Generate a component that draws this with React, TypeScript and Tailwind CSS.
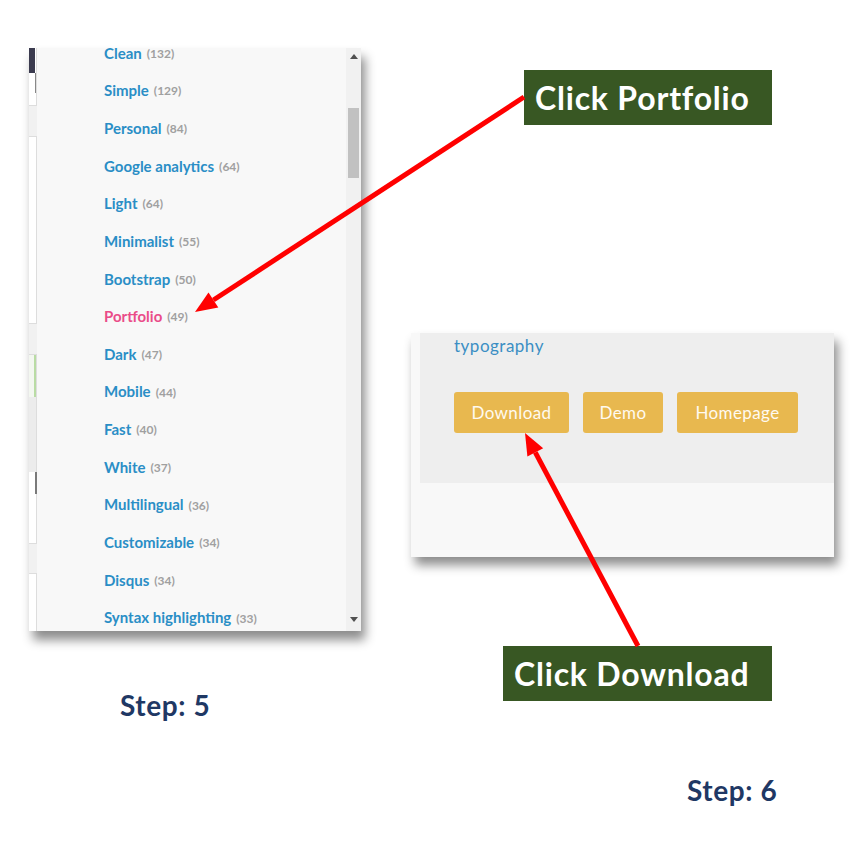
const tags: [string, number][] = [
  ['Clean', 132],
  ['Simple', 129],
  ['Personal', 84],
  ['Google analytics', 64],
  ['Light', 64],
  ['Minimalist', 55],
  ['Bootstrap', 50],
  ['Portfolio', 49],
  ['Dark', 47],
  ['Mobile', 44],
  ['Fast', 40],
  ['White', 37],
  ['Multilingual', 36],
  ['Customizable', 34],
  ['Disqus', 34],
  ['Syntax highlighting', 33],
];

function TagPanel() {
  return (
    <div className="flex h-[583px] w-[332px] overflow-hidden bg-[#f8f8f8] shadow-[4px_9px_10px_rgba(0,0,0,0.45)]">
      {/* sliver of the page behind the dropdown */}
      <div className="flex w-[8px] shrink-0 flex-col bg-[#f1f1f1]">
        <div className="relative h-[59px] border-b border-r border-[#dddddd] bg-white">
          <div className="h-[25px] w-[6px] bg-[#3b3b4f]" />
          <div className="ml-[6px] h-[20px] w-[1px] bg-[#888888]" />
        </div>
        <div className="mt-[30px] h-[193px] border-y border-r border-[#dddddd] bg-white" />
        <div className="mt-[30px] flex h-[195px] flex-col border-y border-r border-[#dddddd] bg-white">
          <div className="h-[42px] border-r-2 border-[#b9dca4] bg-[#f3f7f0]" />
          <div className="h-[75px] bg-[#ececec]" />
          <div className="ml-[6px] h-[22px] w-[2px] bg-[#7a7a7a]" />
        </div>
        <div className="mt-[29px] h-[60px] border-t border-r border-[#dddddd] bg-white" />
      </div>

      <ul className="mt-[-14px] flex-1 pl-[67px] font-['Lato',sans-serif]">
        {tags.map(([name, count]) => (
          <li key={name} className="flex h-[37.67px] items-center whitespace-nowrap">
            <span
              className={`text-[15px] font-bold ${name === 'Portfolio' ? 'text-[#ea4c89]' : 'text-[#2a8ec6]'}`}
            >
              {name}
            </span>
            <span className="ml-[5px] mt-[2px] text-[12px] font-bold text-[#a0a0a0]">({count})</span>
          </li>
        ))}
      </ul>

      <div className="flex w-[15px] shrink-0 flex-col items-center bg-[#f1f1f1]">
        <svg width="8" height="5" viewBox="0 0 8 5" className="mt-[6px]">
          <polygon points="4,0 8,5 0,5" fill="#505050" />
        </svg>
        <div className="mt-[49px] h-[70px] w-[11px] bg-[#c1c1c1]" />
        <div className="flex-1" />
        <svg width="8" height="5" viewBox="0 0 8 5" className="mb-[9px]">
          <polygon points="0,0 8,0 4,5" fill="#505050" />
        </svg>
      </div>
    </div>
  );
}

function ActionPanel() {
  const btn =
    'flex h-[41px] items-center justify-center rounded-[3px] bg-[#e8b84f] text-[17px] tracking-[0.4px] text-[#fffaf0]';
  return (
    <div className="flex h-[224px] w-[423px] flex-col bg-[#f8f8f8] pl-[9px] shadow-[4px_8px_10px_rgba(0,0,0,0.45)] font-['Lato',sans-serif]">
      <div className="h-[150px] bg-[#eeeeee] pl-[34px]">
        <div className="mt-[3px] text-[17px] leading-[20px] tracking-[0.5px] text-[#3b8ec4]">typography</div>
        <div className="mt-[36px] flex gap-[14px]">
          <div className={`${btn} w-[115px]`}>Download</div>
          <div className={`${btn} w-[80px]`}>Demo</div>
          <div className={`${btn} w-[121px]`}>Homepage</div>
        </div>
      </div>
    </div>
  );
}

function Callout({ text, width }: { text: string; width: number }) {
  return (
    <div
      className="flex h-[55px] items-center bg-[#385723] pl-[11px] font-['Lato',sans-serif] text-[32px] font-bold tracking-[0.8px] text-white"
      style={{ width }}
    >
      {text}
    </div>
  );
}

export default function App() {
  return (
    <div className="relative flex h-[864px] w-[864px] overflow-hidden bg-white">
      <div className="flex w-[361px] shrink-0 flex-col pl-[29px] pt-[48px]">
        <TagPanel />
        <div className="ml-[91px] mt-[57px] font-['Lato',sans-serif] text-[28px] font-bold leading-[34px] tracking-[0.6px] text-[#1f3864]">
          Step: 5
        </div>
      </div>

      <div className="flex flex-1 flex-col">
        <div className="ml-[163px] mt-[70px]">
          <Callout text="Click Portfolio" width={248} />
        </div>
        <div className="ml-[50px] mt-[208px]">
          <ActionPanel />
        </div>
        <div className="ml-[142px] mt-[89px]">
          <Callout text="Click Download" width={269} />
        </div>
        <div className="ml-[326px] mt-[72px] font-['Lato',sans-serif] text-[28px] font-bold leading-[34px] tracking-[0.6px] text-[#1f3864]">
          Step: 6
        </div>
      </div>

      {/* annotation arrows */}
      <svg className="pointer-events-none absolute left-0 top-0" width="864" height="864" viewBox="0 0 864 864">
        <line x1="524" y1="97" x2="213.4" y2="300" stroke="#ff0000" strokeWidth="5" />
        <polygon points="195,312 218.3,307.5 208.5,292.5" fill="#ff0000" />
        <line x1="638" y1="646" x2="535.3" y2="452.4" stroke="#ff0000" strokeWidth="5" />
        <polygon points="525,433 543.2,448.2 527.4,456.6" fill="#ff0000" />
      </svg>
    </div>
  );
}
